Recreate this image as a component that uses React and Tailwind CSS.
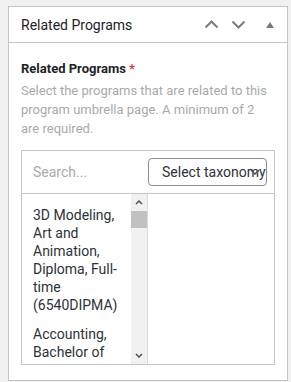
import React from 'react';

const programs = [
  '3D Modeling, Art and Animation, Diploma, Full-time (6540DIPMA)',
  'Accounting, Bachelor of',
];

function Chevron({ dir }) {
  return (
    <svg width="15" height="9" viewBox="0 0 15 9" className="block">
      <path
        d={dir === 'up' ? 'M1.5 7.5 L7.5 1.5 L13.5 7.5' : 'M1.5 1.5 L7.5 7.5 L13.5 1.5'}
        fill="none"
        stroke="#787c82"
        strokeWidth="2"
      />
    </svg>
  );
}

export default function App() {
  return (
    <div className="min-h-[382px] w-[291px] bg-[#f0f0f1] pt-[6px] pl-[8px] font-['Roboto',sans-serif]">
      <div className="w-[280px] border border-[#c3c4c7] bg-white">
        {/* header */}
        <div className="flex h-[36px] items-center justify-between border-b border-[#c3c4c7] pl-[12px]">
          <h2 className="text-[14px] leading-[18px] text-[#1d2327]">Related Programs</h2>
          <div className="flex items-center pr-[13px]">
            <Chevron dir="up" />
            <div className="ml-[12px]">
              <Chevron dir="down" />
            </div>
            <svg width="8" height="6" viewBox="0 0 8 6" className="ml-[20px] block">
              <path d="M4 0 L8 6 L0 6 Z" fill="#787c82" />
            </svg>
          </div>
        </div>

        {/* body */}
        <div className="px-[12px] pt-[16px] pb-[15px]">
          <div className="text-[13px] font-bold leading-[19px] text-[#1d2327]">
            Related Programs <span className="text-[#d63638]">*</span>
          </div>
          <p className="mt-[3px] text-[13px] leading-[19px] text-[#a7aaad]">
            Select the programs that are related to this program umbrella page. A minimum of 2 are required.
          </p>

          <div className="mt-[12px] border border-[#c3c4c7]">
            <div className="flex h-[43px] items-center justify-between border-b border-[#c3c4c7] pl-[11px] pr-[7px]">
              <span className="text-[14px] text-[#a7aaad]">Search...</span>
              <div className="relative flex h-[28px] w-[119px] items-center rounded-[4px] border border-[#8c8f94] pl-[13px]">
                <span className="whitespace-nowrap text-[14px] text-[#2c3338] overflow-hidden">Select taxonomy</span>
                <svg width="10" height="6" viewBox="0 0 10 6" className="absolute right-[6px] top-[10px]">
                  <path d="M1 1 L5 5 L9 1" fill="none" stroke="#555" strokeWidth="1.5" />
                </svg>
              </div>
            </div>

            <div className="flex h-[170px]">
              <div className="flex w-[126px] border-r border-[#dcdcde]">
                <ul className="flex-1 overflow-hidden pt-[6px]">
                  {programs.map((p) => (
                    <li key={p} className="pl-[11px] pr-[6px] pt-[6px] pb-[5px] text-[14px] leading-[18px] text-[#2c3338]">
                      {p}
                    </li>
                  ))}
                </ul>
                <div className="flex w-[16px] flex-col bg-[#f1f1f1]">
                  <div className="flex h-[17px] items-center justify-center">
                    <svg width="8" height="5" viewBox="0 0 8 5"><path d="M1 4 L4 1 L7 4" fill="none" stroke="#505050" strokeWidth="1.5" /></svg>
                  </div>
                  <div className="h-[17px] bg-[#c1c1c1]" />
                  <div className="flex-1" />
                  <div className="flex h-[17px] items-center justify-center">
                    <svg width="8" height="5" viewBox="0 0 8 5"><path d="M1 1 L4 4 L7 1" fill="none" stroke="#505050" strokeWidth="1.5" /></svg>
                  </div>
                </div>
              </div>
              <div className="flex-1" />
            </div>
          </div>
        </div>
      </div>
    </div>
  );
}
